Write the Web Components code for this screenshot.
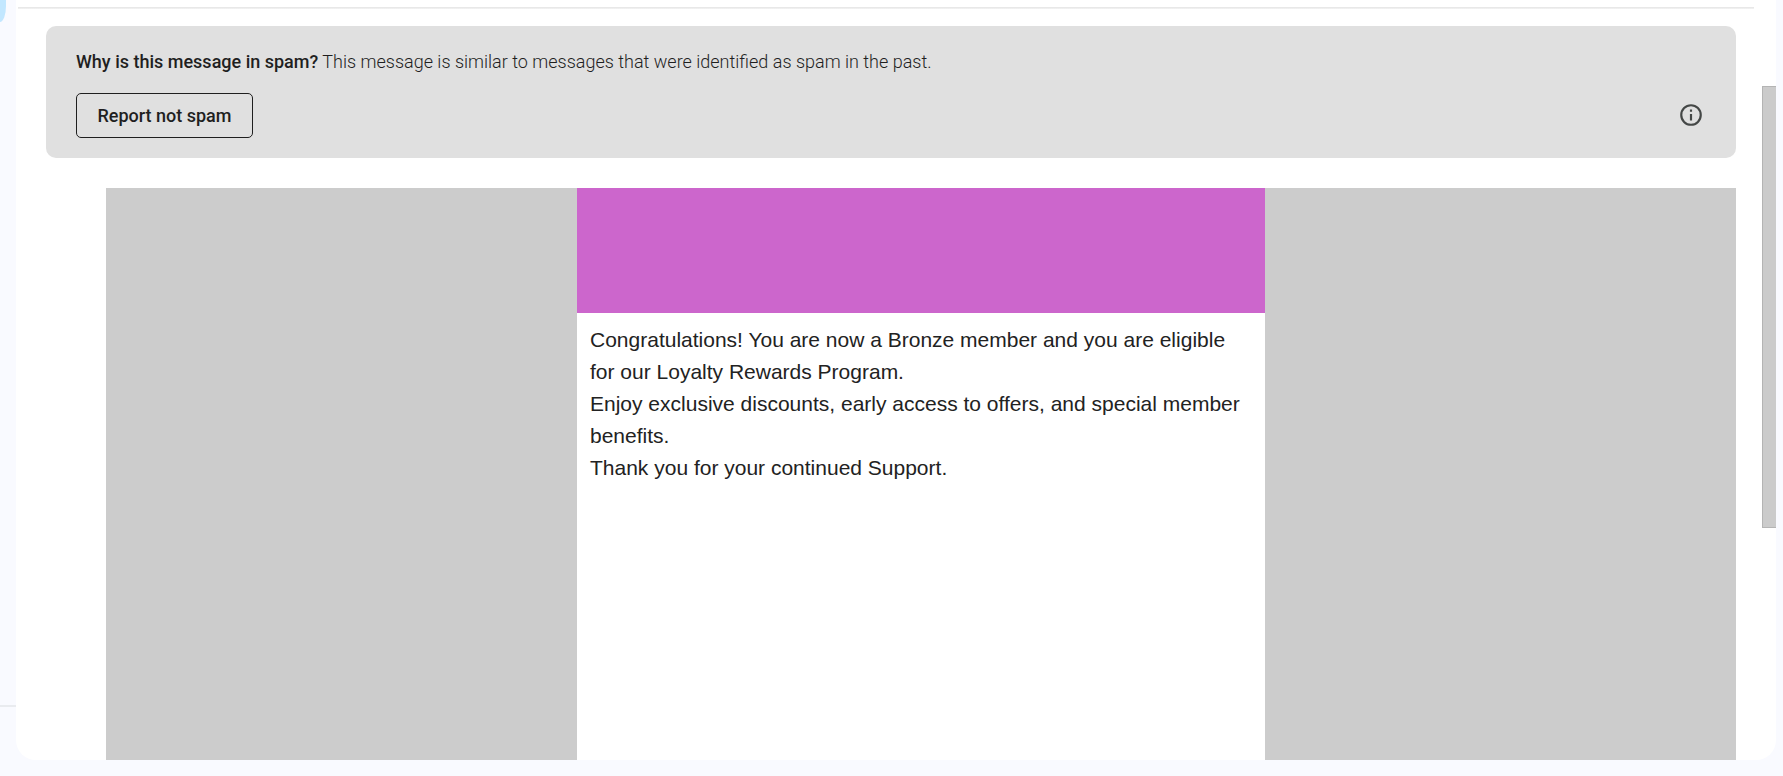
<!DOCTYPE html>
<html lang="en">
<head>
<meta charset="utf-8">
<title>Spam message</title>
<style>
  html, body { margin: 0; }
  body { background: #f9faff; color: #1f1f1f; font-family: Roboto, "Liberation Sans", sans-serif; }
</style>
</head>
<body>
<mail-shell>
  <nav-rail slot="rail"></nav-rail>
  <message-pane>
    <spam-banner>
      <strong slot="question">Why is this message in spam?</strong>
      <span>This message is similar to messages that were identified as spam in the past.</span>
    </spam-banner>
    <mail-body>
      <div>Congratulations! You are now a Bronze member and you are eligible for our Loyalty Rewards Program.</div>
      <div>Enjoy exclusive discounts, early access to offers, and special member benefits.</div>
      <div>Thank you for your continued Support.</div>
    </mail-body>
  </message-pane>
</mail-shell>
<script>
  const define = (name, html) => {
    const template = document.createElement('template');
    template.innerHTML = html;
    customElements.define(name, class extends HTMLElement {
      constructor() {
        super();
        this.attachShadow({ mode: 'open' }).append(template.content.cloneNode(true));
      }
    });
  };

  define('mail-shell', `
    <style>
      :host { display: grid; grid-template-columns: 16px minmax(0, 1fr); height: 100vh; padding-right: 7px; overflow: hidden; box-sizing: border-box; }
      main { display: flex; min-height: 0; margin-bottom: 16px; }
    </style>
    <slot name="rail"></slot>
    <main><slot></slot></main>`);

  define('nav-rail', `
    <style>
      :host { display: flex; flex-direction: column; justify-content: space-between; }
      .selected { width: 6px; height: 22px; background: #c2e7ff; border-bottom-right-radius: 6px 16px; }
      .footer { height: 69px; border-top: 2px solid #e9ebef; }
    </style>
    <div class="selected"></div>
    <div class="footer"></div>`);

  define('message-pane', `
    <style>
      :host { display: flex; flex: 1; min-width: 0; background: #fff; border-radius: 0 0 20px 20px; overflow: hidden; }
      .content { flex: 1; min-width: 0; display: flex; flex-direction: column; }
      .divider { flex: none; height: 2px; margin: 7px 8px 17px 2px; background: linear-gradient(#e4e4e4, #f3f3f3); }
      .stack { flex: 1; min-height: 0; display: flex; flex-direction: column; gap: 30px; padding: 0 26px 0 30px; }
      .track { width: 14px; }
      .thumb { box-sizing: border-box; height: 442px; margin-top: 86px; background: #cbcbcb; border: 1px solid #b4b4b4; border-right: 0; }
    </style>
    <div class="content">
      <div class="divider"></div>
      <div class="stack"><slot></slot></div>
    </div>
    <div class="track"><div class="thumb"></div></div>`);

  define('spam-banner', `
    <style>
      :host { display: block; flex: none; padding: 24px 30px 20px; background: #e0e0e0; border-radius: 10px; }
      p { margin: 0 0 19px; font-size: 18px; line-height: 24px; font-weight: 330; }
      ::slotted(strong) { font-weight: 480; }
      .actions { display: flex; align-items: center; justify-content: space-between; }
      button { font: inherit; color: inherit; cursor: pointer; }
      .report { min-width: 177px; height: 45px; padding: 0 19px; font-size: 18px; font-weight: 480; background: none; border: 1px solid #1f1f1f; border-radius: 5px; }
      .info { display: flex; padding: 0 0 2px; margin-right: 2px; background: none; border: 0; }
      svg { width: 26px; height: 26px; fill: #444746; }
    </style>
    <p><slot name="question"></slot> <slot></slot></p>
    <div class="actions">
      <button class="report" type="button">Report not spam</button>
      <button class="info" type="button" aria-label="Learn more">
        <svg viewBox="0 0 24 24" aria-hidden="true"><path d="M11 7h2v2h-2zm0 4h2v6h-2zm1-9a10 10 0 1 0 0 20 10 10 0 0 0 0-20zm0 18a8 8 0 1 1 0-16 8 8 0 0 1 0 16z"/></svg>
      </button>
    </div>`);

  define('mail-body', `
    <style>
      :host { display: flex; flex: 1; min-height: 0; justify-content: center; margin-left: 60px; background: #ccc; }
      article { box-sizing: border-box; width: 688px; background: #fff; font: 21px/32px "Liberation Sans", Arial, sans-serif; color: #222; }
      .hero { height: 125px; background: #c6c; }
      .copy { padding: 11px 13px; }
    </style>
    <article>
      <div class="hero"></div>
      <div class="copy"><slot></slot></div>
    </article>`);
</script>
</body>
</html>
